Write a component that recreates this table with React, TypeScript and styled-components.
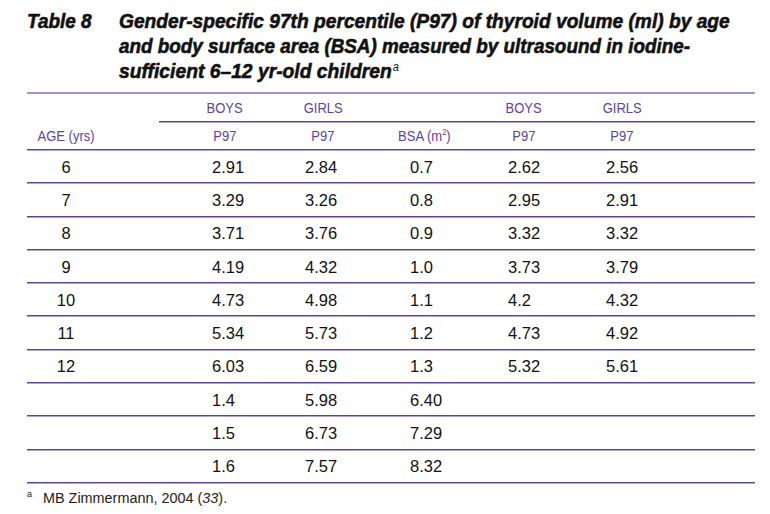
import React, { useLayoutEffect, useRef, useState } from "react";
import styled, { createGlobalStyle } from "styled-components";

const GlobalStyle = createGlobalStyle`
  html, body {
    margin: 0;
    padding: 0;
    background: #ffffff;
  }
`;

const COLS = "132px 132px 64px 138px 62px 134px 66px";

const rows: [string, string, string, string, string, string][] = [
  ["6", "2.91", "2.84", "0.7", "2.62", "2.56"],
  ["7", "3.29", "3.26", "0.8", "2.95", "2.91"],
  ["8", "3.71", "3.76", "0.9", "3.32", "3.32"],
  ["9", "4.19", "4.32", "1.0", "3.73", "3.79"],
  ["10", "4.73", "4.98", "1.1", "4.2", "4.32"],
  ["11", "5.34", "5.73", "1.2", "4.73", "4.92"],
  ["12", "6.03", "6.59", "1.3", "5.32", "5.61"],
  ["", "1.4", "5.98", "6.40", "", ""],
  ["", "1.5", "6.73", "7.29", "", ""],
  ["", "1.6", "7.57", "8.32", "", ""],
];

// left padding of the numbers inside each column
const PADS = [0, 53, 14, 55, 15, 51];

// squeezes a line of text to the width the printed (condensed) face had
const Fit = ({ width, children }: { width: number; children: React.ReactNode }) => {
  const ref = useRef<HTMLSpanElement>(null);
  const [scale, setScale] = useState(1);

  useLayoutEffect(() => {
    if (ref.current) setScale(width / ref.current.offsetWidth);
  }, [width]);

  return (
    <FitBox ref={ref} style={{ transform: `scaleX(${scale})` }}>
      {children}
    </FitBox>
  );
};

const App = () => {
  return (
    <>
      <GlobalStyle />
      <Page>
        <Caption>
          <Label>
            <Fit width={65}>Table 8</Fit>
          </Label>
          <Title>
            <Line>
              <Fit width={611}>
                Gender-specific 97th percentile (P97) of thyroid volume (ml) by age
              </Fit>
            </Line>
            <Line>
              <Fit width={571}>
                and body surface area (BSA) measured by ultrasound in iodine-
              </Fit>
            </Line>
            <Line>
              <Fit width={280}>
                sufficient 6–12 yr-old children<sup>a</sup>
              </Fit>
            </Line>
          </Title>
        </Caption>

        <Table>
          <HeadTop>
            <HeadCell />
            <HeadCell $ruled>
              <Narrow>BOYS</Narrow>
            </HeadCell>
            <HeadCell $ruled>
              <Narrow>GIRLS</Narrow>
            </HeadCell>
            <HeadCell $ruled />
            <HeadCell $ruled>
              <Narrow>BOYS</Narrow>
            </HeadCell>
            <HeadCell $ruled>
              <Narrow>GIRLS</Narrow>
            </HeadCell>
            <HeadCell $ruled />
          </HeadTop>
          <HeadBottom>
            <HeadCell $age>
              <Narrow>AGE (yrs)</Narrow>
            </HeadCell>
            <HeadCell>
              <Narrow>P97</Narrow>
            </HeadCell>
            <HeadCell>
              <Narrow>P97</Narrow>
            </HeadCell>
            <HeadCell>
              <Narrow>
                BSA (m<sup>2</sup>)
              </Narrow>
            </HeadCell>
            <HeadCell>
              <Narrow>P97</Narrow>
            </HeadCell>
            <HeadCell>
              <Narrow>P97</Narrow>
            </HeadCell>
            <HeadCell />
          </HeadBottom>

          {rows.map((r, i) => (
            <Row key={i}>
              <AgeCell>{r[0]}</AgeCell>
              {r.slice(1).map((v, j) => (
                <Cell key={j} $pad={PADS[j + 1]}>
                  {v}
                </Cell>
              ))}
              <Cell $pad={0} />
            </Row>
          ))}
        </Table>

        <Note>
          <NoteMark>a</NoteMark>
          <Fit width={184}>
            MB Zimmermann, 2004 (<i>33</i>).
          </Fit>
        </Note>
      </Page>
    </>
  );
};

export default App;

const Page = styled.div`
  width: 770px;
  height: 514px;
  padding: 8px 0 0 27px;
  box-sizing: border-box;
  background: #ffffff;
`;

const Caption = styled.div`
  display: flex;
  font-family: "Liberation Sans", Arial, sans-serif;
  font-weight: 700;
  font-style: italic;
  font-size: 21px;
  line-height: 25px;
  color: #111111;
  -webkit-text-stroke: 0.6px #111111;
`;

const Label = styled.div`
  width: 92px;
  flex-shrink: 0;
`;

const Title = styled.div`
  width: 640px;

  sup {
    font-size: 12px;
    line-height: 0;
    vertical-align: 7px;
    font-weight: 400;
    margin-left: 1px;
    -webkit-text-stroke: 0;
  }
`;

const Line = styled.div`
  height: 25px;
  white-space: nowrap;
`;

const FitBox = styled.span`
  display: inline-block;
  white-space: nowrap;
  transform-origin: left center;
`;

const Narrow = styled.span`
  display: inline-block;
  white-space: nowrap;
  transform: scaleX(0.84);
  transform-origin: center;

  sup {
    font-size: 9px;
    line-height: 0;
    vertical-align: 6px;
  }
`;

const Table = styled.div`
  width: 728px;
  margin-top: 9px;
  border-top: 2px solid #a28fcb;
`;

const HeadTop = styled.div`
  display: grid;
  grid-template-columns: ${COLS};
  height: 28px;
`;

const HeadBottom = styled.div`
  display: grid;
  grid-template-columns: ${COLS};
  height: 27px;
  border-bottom: 1px solid #5d4398;
  box-shadow: 0 1px 0 #b3a4d6;
`;

const HeadCell = styled.div<{ $ruled?: boolean; $age?: boolean }>`
  display: flex;
  align-items: center;
  justify-content: center;
  padding-right: ${(p) => (p.$age ? "54px" : "0")};
  font-family: "Liberation Sans", Arial, sans-serif;
  font-size: 15.5px;
  color: #5e43a0;
  border-bottom: ${(p) => (p.$ruled ? "1px solid #5d4398" : "none")};
  box-shadow: ${(p) => (p.$ruled ? "0 1px 0 #b3a4d6" : "none")};
`;

const Row = styled.div`
  display: grid;
  grid-template-columns: ${COLS};
  height: 33.3px;
  box-sizing: border-box;
  padding-top: 2px;
  border-bottom: 1px solid #5d4398;
  box-shadow: 0 1px 0 #b3a4d6;
`;

const AgeCell = styled.div`
  display: flex;
  align-items: center;
  justify-content: center;
  padding-right: 54px;
  font-family: "Liberation Sans", Arial, sans-serif;
  font-size: 16.5px;
  color: #111111;
`;

const Cell = styled.div<{ $pad: number }>`
  display: flex;
  align-items: center;
  padding-left: ${(p) => p.$pad}px;
  font-family: "Liberation Sans", Arial, sans-serif;
  font-size: 16.5px;
  color: #111111;
`;

const Note = styled.div`
  display: flex;
  align-items: flex-start;
  margin-top: 5px;
  font-family: "Liberation Sans", Arial, sans-serif;
  font-size: 15.5px;
  line-height: 19px;
  color: #222222;
`;

const NoteMark = styled.span`
  width: 16px;
  font-size: 9px;
  line-height: 12px;
`;
